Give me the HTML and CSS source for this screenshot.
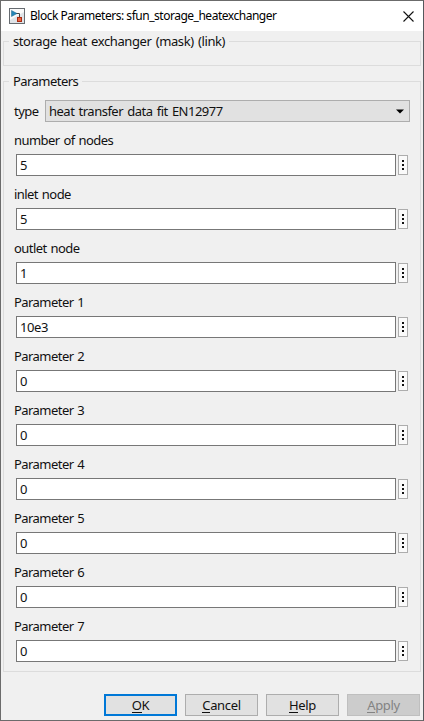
FILE: index.html
```html
<!DOCTYPE html>
<html lang="en">
<head>
<meta charset="utf-8">
<title>Block Parameters</title>
<link rel="stylesheet" href="styles.css">
</head>
<body>
<main class="dialog">
  <header class="titlebar">
    <svg class="app-icon" width="16" height="16" viewBox="0 0 16 16">
      <rect x=".5" y=".5" width="15" height="15" fill="#dfe3e7" stroke="#666b70"/>
      <path d="M1 1h14v3L1 12z" fill="#fafafa"/>
      <path d="M7 5.500h3.500V9" fill="none" stroke="#444"/>
      <path d="M2.500 2.500v6L8 5.500z" fill="#2487b8" stroke="#176187" stroke-width=".5"/>
      <rect x="8.500" y="9.500" width="4" height="4" fill="#ed6540" stroke="#a92b12"/>
    </svg>
    <h1 class="title">Block Parameters: sfun_storage_heatexchanger</h1>
    <svg class="close" width="11" height="11" viewBox="0 0 11 11"><path d="M.5.5l10 10M10.500.5l-10 10" fill="none" stroke="#111" stroke-width="1.100"/></svg>
  </header>
  <section class="group mask"><h2 class="legend mask-name">storage heat exchanger (mask) (link)</h2></section>
  <section class="group parameters">
    <h2 class="legend">Parameters</h2>
    <div class="type-row">
      <span class="type-label">type</span>
      <div class="select"><span class="choice">heat transfer data fit EN12977</span><svg width="8" height="5" viewBox="0 0 8 5"><path d="M0 .5h8L4 4.500z" fill="#000"/></svg></div>
    </div>
    <div class="field"><span class="label">number of nodes</span><div class="entry"><div class="input">5</div><div class="more"><i></i><i></i><i></i></div></div></div>
    <div class="field"><span class="label">inlet node</span><div class="entry"><div class="input">5</div><div class="more"><i></i><i></i><i></i></div></div></div>
    <div class="field"><span class="label">outlet node</span><div class="entry"><div class="input">1</div><div class="more"><i></i><i></i><i></i></div></div></div>
    <div class="field"><span class="label">Parameter 1</span><div class="entry"><div class="input">10e3</div><div class="more"><i></i><i></i><i></i></div></div></div>
    <div class="field"><span class="label">Parameter 2</span><div class="entry"><div class="input">0</div><div class="more"><i></i><i></i><i></i></div></div></div>
    <div class="field"><span class="label">Parameter 3</span><div class="entry"><div class="input">0</div><div class="more"><i></i><i></i><i></i></div></div></div>
    <div class="field"><span class="label">Parameter 4</span><div class="entry"><div class="input">0</div><div class="more"><i></i><i></i><i></i></div></div></div>
    <div class="field"><span class="label">Parameter 5</span><div class="entry"><div class="input">0</div><div class="more"><i></i><i></i><i></i></div></div></div>
    <div class="field"><span class="label">Parameter 6</span><div class="entry"><div class="input">0</div><div class="more"><i></i><i></i><i></i></div></div></div>
    <div class="field"><span class="label">Parameter 7</span><div class="entry"><div class="input">0</div><div class="more"><i></i><i></i><i></i></div></div></div>
  </section>
  <footer class="actions">
    <div class="button primary"><span><u>O</u>K</span></div>
    <div class="button"><span><u>C</u>ancel</span></div>
    <div class="button"><span><u>H</u>elp</span></div>
    <div class="button disabled"><span><u>A</u>pply</span></div>
  </footer>
</main>
</body>
</html>
```
FILE: styles.css
```css
* { box-sizing: border-box; }
body { margin: 0; font: 13px/18px "Noto Sans", sans-serif; letter-spacing: -0.55px; color: #111; }
.dialog { display: flex; flex-direction: column; width: 424px; height: 721px; background: #f0f0f0; border: 1px solid #6b6b6b; border-right-color: #55585c; overflow: hidden; }
.titlebar { display: flex; align-items: center; height: 30px; flex: none; background: #fff; padding: 0 9px 0 8px; }
.app-icon { flex: none; }
.title { margin: 0 auto 0 5px; font-size: 12px; letter-spacing: -0.48px; line-height: 18px; font-weight: 400; color: #000; white-space: nowrap; }
.close { flex: none; }
.group { border: 1px solid #dcdcdc; margin: 0 2px; flex: none; }
.mask { height: 25px; margin-top: 10px; }
.parameters { height: 591px; margin-top: 15px; padding-left: 10px; }
.legend { width: max-content; height: 18px; margin: -10px 0 0 5px; padding: 0 4px; background: #f0f0f0; font-size: 13px; line-height: 18px; font-weight: 400; white-space: nowrap; }
.mask-name { letter-spacing: -0.4px; word-spacing: 1.3px; }
.parameters .legend { margin-left: -5px; }
.type-row { display: flex; align-items: center; height: 22px; margin-top: 10px; }
.type-label { width: 31px; }
.select { display: flex; align-items: center; justify-content: space-between; width: 365px; height: 22px; padding: 0 5px 0 3px; border: 1px solid #adadad; background: #e1e1e1; }
.choice { letter-spacing: -0.5px; word-spacing: 1.3px; }
.field { height: 54px; padding-top: 9px; }
.label { display: block; height: 23px; line-height: 18px; word-spacing: 1px; }
.entry { display: flex; align-items: center; gap: 2px; padding-left: 2px; }
.input { width: 380px; height: 22px; padding: 1px 3px; border: 1px solid #777; background: #fff; letter-spacing: -0.4px; }
.more { display: flex; flex-direction: column; align-items: center; justify-content: center; gap: 2px; width: 10px; height: 20px; border: 1px solid #adadad; background: #fafafa; }
.more i { width: 2px; height: 2px; background: #111; }
.actions { display: flex; justify-content: flex-end; gap: 8px; margin: 22px 3px 0 0; }
.button { display: flex; align-items: center; justify-content: center; width: 73px; height: 22px; border: 1px solid #adadad; background: #e1e1e1; letter-spacing: -0.35px; }
.button u { text-decoration: none; box-shadow: 0 1px #111; display: inline-block; height: 16px; line-height: 18px; }
.primary { border: 2px solid #0078d7; }
.disabled { background: #ccc; border-color: #bfbfbf; color: #838383; }
.disabled u { box-shadow: 0 1px #838383; }
```
